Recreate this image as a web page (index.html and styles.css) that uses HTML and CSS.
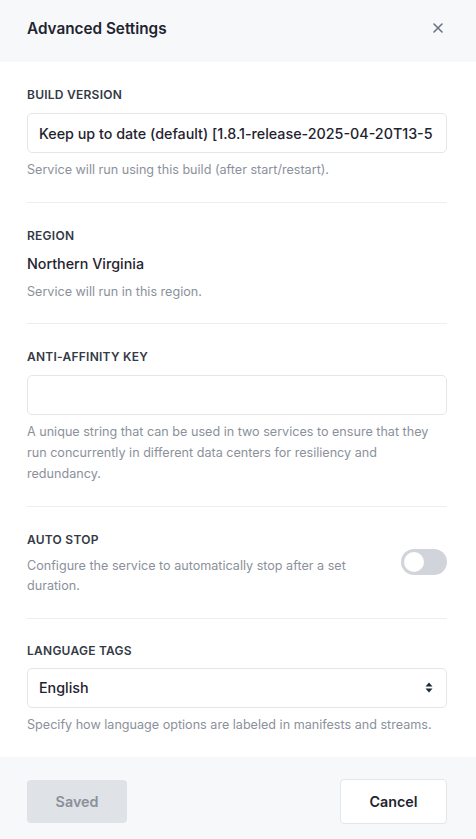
FILE: index.html
```html
<!DOCTYPE html>
<html lang="en">
<head>
<meta charset="utf-8">
<title>Advanced Settings</title>
<link rel="stylesheet" href="styles.css">
</head>
<body>
<div class="modal">
  <header class="modal-header">
    <h1 class="modal-title">Advanced Settings</h1>
    <button class="close-btn" aria-label="Close">
      <svg width="12" height="12" viewBox="0 0 12 12"><path d="M2 2 L10 10 M10 2 L2 10" stroke="#6b7280" stroke-width="1.6" stroke-linecap="round"/></svg>
    </button>
  </header>
  <main class="modal-body">
    <section class="field">
      <div class="label">BUILD VERSION</div>
      <div class="select select-clip"><span class="select-text">Keep up to date (default) [1.8.1-release-2025-04-20T13-5</span></div>
      <p class="help">Service will run using this build (after start/restart).</p>
    </section>
    <section class="field">
      <div class="label">REGION</div>
      <div class="value">Northern Virginia</div>
      <p class="help">Service will run in this region.</p>
    </section>
    <section class="field">
      <div class="label">ANTI-AFFINITY KEY</div>
      <div class="input"></div>
      <p class="help">A unique string that can be used in two services to ensure that they run concurrently in different data centers for resiliency and redundancy.</p>
    </section>
    <section class="field">
      <div class="label">AUTO STOP</div>
      <div class="toggle-row">
        <p class="help help-narrow">Configure the service to automatically stop after a set duration.</p>
        <div class="toggle"><span class="knob"></span></div>
      </div>
    </section>
    <section class="field last">
      <div class="label">LANGUAGE TAGS</div>
      <div class="select">
        <span class="select-text">English</span>
        <svg class="arrows" width="8" height="11" viewBox="0 0 8 11"><path d="M4 0.5 L7.5 4.5 L0.5 4.5 Z M4 10.5 L7.5 6.5 L0.5 6.5 Z" fill="#1f2937"/></svg>
      </div>
      <p class="help">Specify how language options are labeled in manifests and streams.</p>
    </section>
  </main>
  <footer class="modal-footer">
    <button class="btn btn-saved">Saved</button>
    <button class="btn btn-cancel">Cancel</button>
  </footer>
</div>
</body>
</html>
```
FILE: styles.css
```css
* { box-sizing: border-box; }
html, body { margin: 0; padding: 0; }
body {
  font-family: Inter, "Noto Sans", "Liberation Sans", sans-serif;
  background: #ffffff;
  color: #1f2430;
  width: 476px;
  height: 839px;
  overflow: hidden;
}
.modal { display: flex; flex-direction: column; height: 839px; }
.modal-header {
  flex: none;
  height: 62px;
  background: #f7f8fa;
  display: flex;
  align-items: center;
  justify-content: space-between;
  padding: 0 32px 6px 27px;
}
.modal-title {
  margin: 0;
  font-size: 15.3px;
  font-weight: 600;
  color: #1f2430;
}
.close-btn {
  border: 0;
  background: transparent;
  padding: 0;
  width: 12px;
  height: 12px;
  display: flex;
}
.modal-body { flex: 1; min-height: 0; overflow: hidden; padding: 0 29px 0 27px; }
.field {
  padding: 25px 0 21px;
  border-bottom: 1px solid #eceef1;
}
.field.last { border-bottom: 0; padding-top: 24px; }
.label {
  font-size: 12px;
  line-height: 16px;
  font-weight: 600;
  letter-spacing: 0.25px;
  color: #343a45;
  margin-bottom: 10px;
}
.last .label { margin-bottom: 9px; }
.select, .input {
  height: 40px;
  border: 1px solid #e3e6ea;
  border-radius: 5px;
  background: #fff;
  display: flex;
  align-items: center;
  padding: 0 13px 0 11px;
}
.select-clip { overflow: hidden; padding-right: 10px; }
.select-text {
  font-size: 14.3px;
  font-weight: 500;
  color: #1f2430;
  white-space: nowrap;
  flex: 1;
  overflow: hidden;
}
.arrows { flex: none; }
.value {
  font-size: 14.3px;
  line-height: 20px;
  font-weight: 500;
  color: #1f2430;
  margin-bottom: 8px;
}
.help {
  margin: 7px 0 0;
  font-size: 12.6px;
  line-height: 20.7px;
  color: #8b919b;
}
.value + .help { margin-top: 0; }
.toggle-row {
  display: flex;
  justify-content: space-between;
  align-items: flex-start;
  margin-top: -2px;
}
.help-narrow { max-width: 345px; margin-top: 0; }
.toggle {
  width: 46px;
  height: 26px;
  border-radius: 13px;
  background: #d1d4da;
  margin-top: -7px;
  padding: 3px;
  flex: none;
}
.knob {
  display: block;
  width: 20px;
  height: 20px;
  border-radius: 50%;
  background: #fff;
}
.modal-footer {
  flex: none;
  height: 82px;
  background: #f7f8fa;
  display: flex;
  align-items: center;
  justify-content: space-between;
  padding: 6px 29px 0 27px;
}
.btn {
  font-family: inherit;
  font-size: 14.3px;
  font-weight: 600;
  border-radius: 4px;
}
.btn-saved {
  width: 100px;
  height: 43px;
  background: #dfe2e6;
  border: 0;
  color: #8a909a;
}
.btn-cancel {
  width: 107px;
  height: 45px;
  background: #fff;
  border: 1px solid #e3e6ea;
  color: #1f2430;
}
```
